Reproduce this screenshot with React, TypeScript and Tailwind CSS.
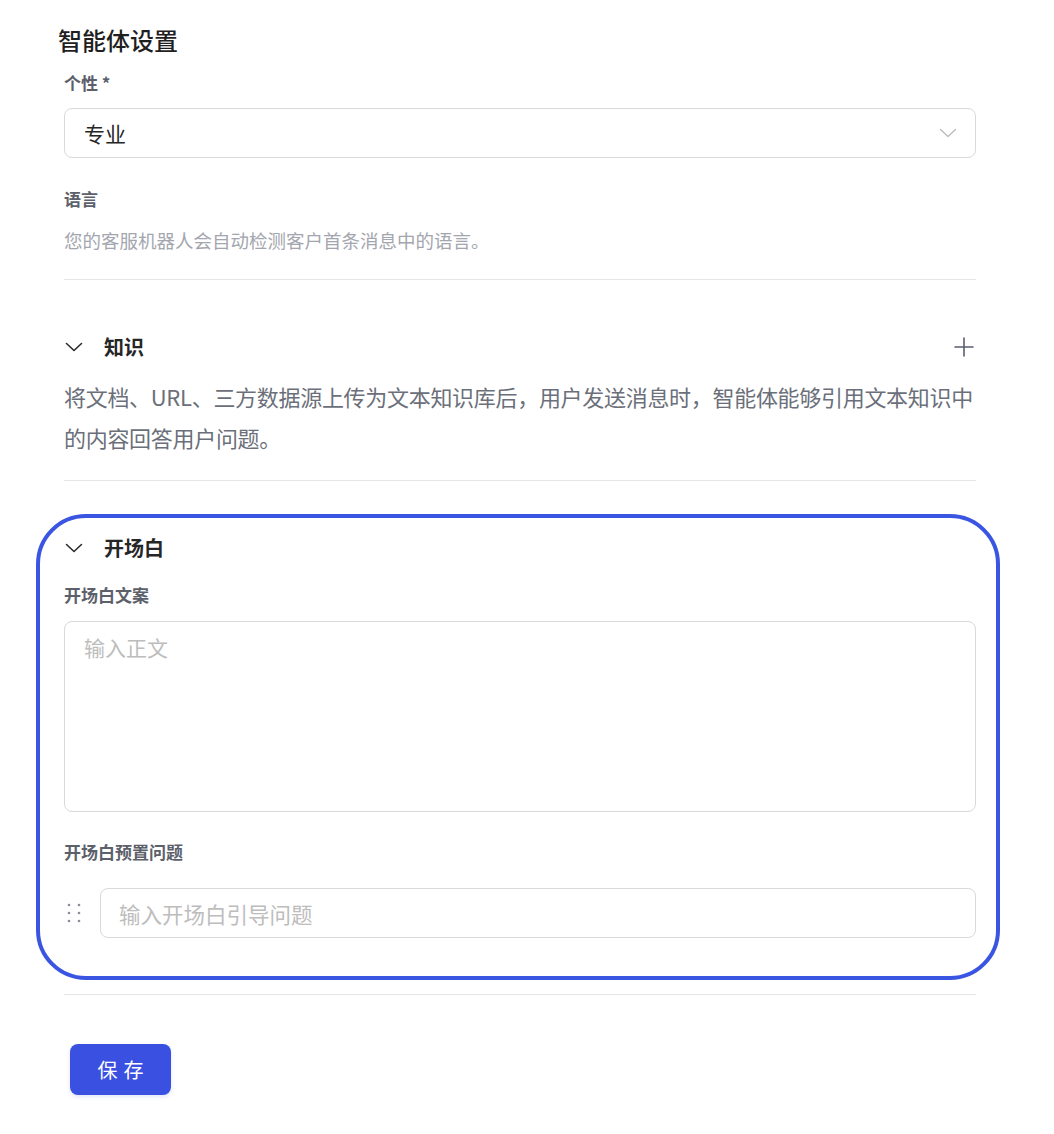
import React from "react";

function Chevron({ className, w = 1.6 }: { className?: string; w?: number }) {
  return (
    <svg width="18" height="10" viewBox="0 0 18 10" fill="none" className={className}>
      <path d="M1.5 1.5 L9 8.5 L16.5 1.5" stroke="currentColor" strokeWidth={w} strokeLinecap="round" strokeLinejoin="round" />
    </svg>
  );
}

export default function App() {
  return (
    <div
      className="min-h-[1134px] w-full bg-white"
      style={{ fontFamily: '"Noto Sans CJK SC", "Noto Sans", "Liberation Sans", sans-serif' }}
    >
      <div className="flex w-[1054px] flex-col pl-[64px] pr-[78px]">
        <h1 className="-ml-[6px] mt-[26px] text-[24px] font-medium leading-[28px] text-[#1f1f1f]">智能体设置</h1>

        <div className="mt-[17px] text-[17px] font-semibold leading-[24px] text-[#5c606b]">个性 *</div>
        <div className="mt-[13px] flex h-[50px] items-center justify-between rounded-[8px] border border-[#d9d9d9] pl-[19px] pr-[18px]">
          <span className="text-[21px] leading-[28px] text-[#262626]">专业</span>
          <Chevron className="text-[#b8b8b8]" w={1.2} />
        </div>

        <div className="mt-[29px] text-[17px] font-semibold leading-[24px] text-[#5c606b]">语言</div>
        <div className="mt-[17px] text-[18.5px] leading-[24px] text-[#a3a6ae]">您的客服机器人会自动检测客户首条消息中的语言。</div>

        <div className="mt-[27px] h-px bg-[#e5e6ea]" />

        <div className="mt-[53px] flex h-[28px] items-center justify-between">
          <div className="flex items-center">
            <Chevron className="ml-[1px] text-[#2b2b2b]" />
            <span className="ml-[21px] text-[20px] font-semibold leading-[28px] text-[#262626]">知识</span>
          </div>
          <svg width="20" height="20" viewBox="0 0 20 20" fill="none" className="mr-[2px] text-[#5a5f6e]">
            <path d="M10 1 V19 M1 10 H19" stroke="currentColor" strokeWidth="1.6" strokeLinecap="round" />
          </svg>
        </div>
        <p className="mt-[15px] text-[22px] leading-[41px] tracking-[-0.3px] text-[#6b6f7a]">
          将文档、URL、三方数据源上传为文本知识库后，用户发送消息时，智能体能够引用文本知识中的内容回答用户问题。
        </p>

        <div className="mt-[22px] h-px bg-[#e5e6ea]" />

        <div className="-ml-[28px] -mr-[24px] mt-[33px] flex flex-col rounded-[50px] border-4 border-[#3a55e2] pb-[38px] pl-[24px] pr-[20px] pt-[16px]">
          <div className="flex h-[28px] items-center">
            <Chevron className="ml-[1px] text-[#2b2b2b]" />
            <span className="ml-[21px] text-[20px] font-semibold leading-[28px] text-[#262626]">开场白</span>
          </div>
          <div className="mt-[21px] text-[17px] font-semibold leading-[24px] text-[#5c606b]">开场白文案</div>
          <textarea
            placeholder="输入正文"
            className="mt-[14px] h-[191px] resize-none rounded-[8px] border border-[#d9d9d9] px-[19px] pt-[11px] text-[21px] leading-[28px] text-[#262626] outline-none placeholder:text-[#bdbdbd]"
          />
          <div className="mt-[28px] text-[17px] font-semibold leading-[24px] text-[#5c606b]">开场白预置问题</div>
          <div className="mt-[24px] flex items-center">
            <div className="flex w-[36px] shrink-0 items-center">
              <svg width="14" height="20" viewBox="0 0 14 20" fill="#8a8e99" className="ml-[3px]">
                <circle cx="2" cy="2" r="1.3" />
                <circle cx="12" cy="2" r="1.3" />
                <circle cx="2" cy="10" r="1.3" />
                <circle cx="12" cy="10" r="1.3" />
                <circle cx="2" cy="18" r="1.3" />
                <circle cx="12" cy="18" r="1.3" />
              </svg>
            </div>
            <input
              placeholder="输入开场白引导问题"
              className="h-[50px] flex-1 rounded-[8px] border border-[#d9d9d9] px-[18px] text-[21.5px] leading-[28px] text-[#262626] outline-none placeholder:text-[#bdbdbd]"
            />
          </div>
        </div>

        <div className="mt-[14px] h-px bg-[#e5e6ea]" />

        <button className="ml-[6px] mt-[49px] flex h-[51px] w-[101px] items-center justify-center rounded-[8px] bg-[#3a50e0] text-[20px] tracking-[6px] text-white shadow-[0_2px_4px_rgba(58,80,224,0.15)]">
          <span className="ml-[6px]">保存</span>
        </button>
      </div>
    </div>
  );
}
